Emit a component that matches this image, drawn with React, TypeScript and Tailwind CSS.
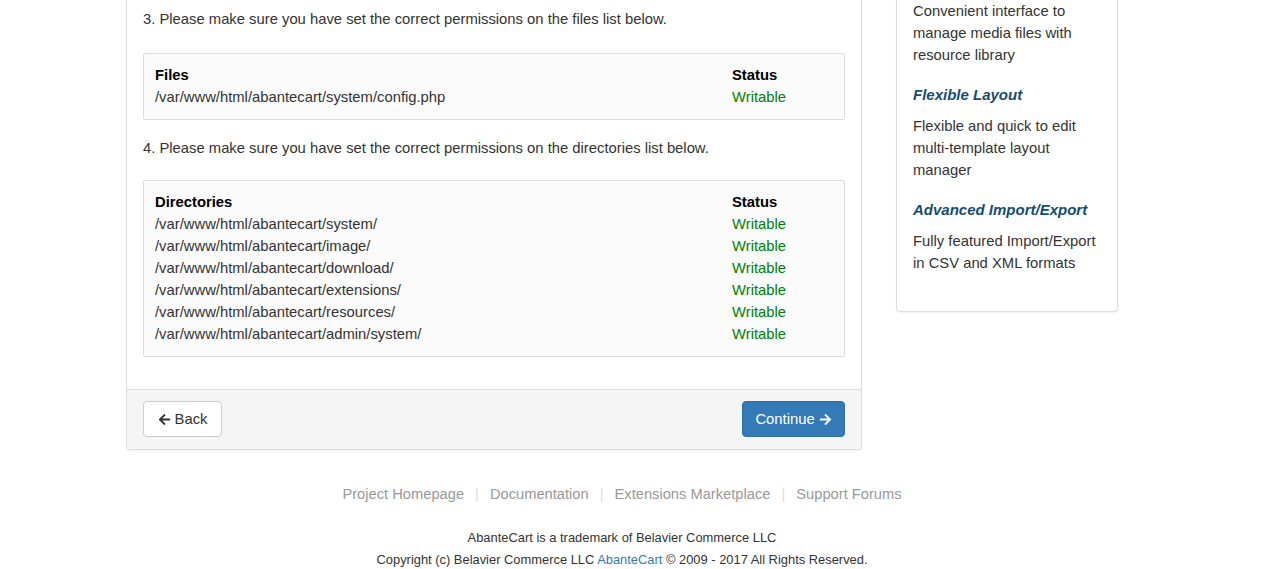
import { FaArrowLeft, FaArrowRight } from "react-icons/fa";

const dirs = [
  "/var/www/html/abantecart/system/",
  "/var/www/html/abantecart/image/",
  "/var/www/html/abantecart/download/",
  "/var/www/html/abantecart/extensions/",
  "/var/www/html/abantecart/resources/",
  "/var/www/html/abantecart/admin/system/",
];

const features = [
  { title: "Flexible Layout", text: "Flexible and quick to edit multi-template layout manager" },
  { title: "Advanced Import/Export", text: "Fully featured Import/Export in CSV and XML formats" },
];

const links = ["Project Homepage", "Documentation", "Extensions Marketplace", "Support Forums"];

function PermBox({ title, rows }: { title: string; rows: string[] }) {
  return (
    <div className="rounded-[2px] border border-[#dddddd] bg-[#fbfbfb] px-[11px] pt-[10px] pb-[11px]">
      <div className="grid grid-cols-[577px_1fr] font-bold text-black">
        <span>{title}</span>
        <span>Status</span>
      </div>
      {rows.map((row) => (
        <div key={row} className="grid grid-cols-[577px_1fr]">
          <span className="text-[#333]">{row}</span>
          <span className="text-[#008000]">Writable</span>
        </div>
      ))}
    </div>
  );
}

export default function App() {
  return (
    <div className="min-h-[569px] bg-white font-['Liberation_Sans',Arial,sans-serif] text-[14.8px] leading-[22px] text-[#333]">
      <div className="ml-[126px] flex w-[992px] items-start gap-[34px]">
        <div className="w-[736px] shrink-0 rounded-b-[4px] border-x border-b border-[#dddddd] shadow-[0_1px_2px_rgba(0,0,0,0.06)]">
          <div className="px-[16px] pt-[8px] pb-[32px]">
            <p className="mb-[23px]">3. Please make sure you have set the correct permissions on the files list below.</p>
            <PermBox title="Files" rows={["/var/www/html/abantecart/system/config.php"]} />
            <p className="mt-[17px] mb-[21px]">4. Please make sure you have set the correct permissions on the directories list below.</p>
            <PermBox title="Directories" rows={dirs} />
          </div>
          <div className="flex items-center justify-between rounded-b-[4px] border-t border-[#dddddd] bg-[#f5f5f5] px-[16px] pt-[11px] pb-[12px]">
            <button className="flex h-[36px] w-[79px] items-center justify-center gap-[4px] rounded-[4px] border border-[#cccccc] bg-white text-[14.8px] text-[#333]">
              <FaArrowLeft className="h-[13px] w-[13px]" />
              Back
            </button>
            <button className="flex h-[36px] w-[103px] items-center justify-center gap-[4px] rounded-[4px] border border-[#2e6da4] bg-[#337ab7] text-[14.8px] text-white">
              Continue
              <FaArrowRight className="h-[13px] w-[13px]" />
            </button>
          </div>
        </div>

        <div className="w-[222px] shrink-0 rounded-b-[4px] border-x border-b border-[#dddddd] px-[16px] pb-[37px] shadow-[0_1px_2px_rgba(0,0,0,0.06)]">
          <p>Convenient interface to manage media files with resource library</p>
          {features.map((f) => (
            <div key={f.title}>
              <h4 className="mt-[18px] mb-[9px] text-[15px] font-bold italic text-[#134d72]">{f.title}</h4>
              <p>{f.text}</p>
            </div>
          ))}
        </div>
      </div>

      <div className="ml-[126px] w-[992px] pt-[33px] text-center">
        <div className="flex justify-center text-[14.7px] text-[#999999]">
          {links.map((l, i) => (
            <span key={l} className="flex">
              {i > 0 ? <span className="mx-[11px] text-[#dddddd]">|</span> : null}
              <span>{l}</span>
            </span>
          ))}
        </div>
        <div className="mt-[22px] text-[12.9px] text-[#333]">
          <p>AbanteCart is a trademark of Belavier Commerce LLC</p>
          <p>
            Copyright (c) Belavier Commerce LLC <span className="text-[#337ab7]">AbanteCart</span> © 2009 - 2017 All Rights Reserved.
          </p>
        </div>
      </div>
    </div>
  );
}
